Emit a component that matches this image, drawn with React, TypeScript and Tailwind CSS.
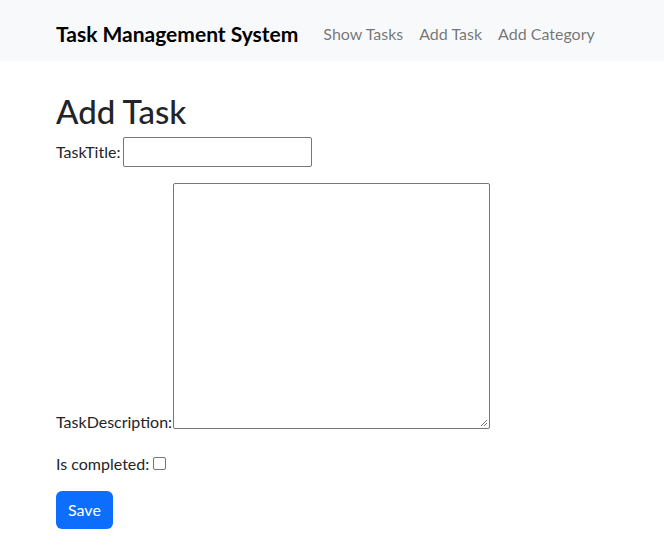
export default function App() {
  const font = { fontFamily: 'Lato, "Noto Sans", sans-serif' };
  return (
    <div className="min-h-[551px] bg-white text-[#212529] text-[16px]" style={font}>
      <nav className="h-[61px] bg-[#f8f9fa] flex items-center pl-[56px] pt-[6px]">
        <span className="text-[21px] font-bold text-black mr-[25px]">Task Management System</span>
        <div className="flex gap-[16px] text-[16px] text-[rgba(0,0,0,0.55)]">
          <span>Show Tasks</span>
          <span>Add Task</span>
          <span>Add Category</span>
        </div>
      </nav>
      <div className="pl-[56px]">
        <h1 className="text-[33px] font-medium leading-[1.2] mt-[31px] mb-[5px]">Add Task</h1>
        <div className="flex items-end">
          <label className="mr-[3px] leading-[24px] mb-[3px]">TaskTitle:</label>
          <div className="w-[189px] h-[30px] border border-[#767676] rounded-[2px]"></div>
        </div>
        <div className="flex items-end mt-[16px]">
          <label className="mr-[1px] leading-[24px] mb-[-5px]">TaskDescription:</label>
          <div className="relative w-[317px] h-[246px] border border-[#767676] rounded-[2px]">
            <svg className="absolute right-[1px] bottom-[1px]" width="9" height="9" viewBox="0 0 9 9">
              <line x1="8" y1="2" x2="2" y2="8" stroke="#767676" strokeWidth="1" />
              <line x1="8" y1="5" x2="5" y2="8" stroke="#767676" strokeWidth="1" />
            </svg>
          </div>
        </div>
        <div className="flex items-center mt-[23px]">
          <label className="mr-[4px] leading-[24px]">Is completed:</label>
          <div className="w-[13px] h-[13px] border border-[#767676] rounded-[2px]"></div>
        </div>
        <button className="mt-[15px] h-[38px] px-[12px] bg-[#0d6efd] text-white rounded-[6px] text-[16px]" style={font}>Save</button>
      </div>
    </div>
  );
}
